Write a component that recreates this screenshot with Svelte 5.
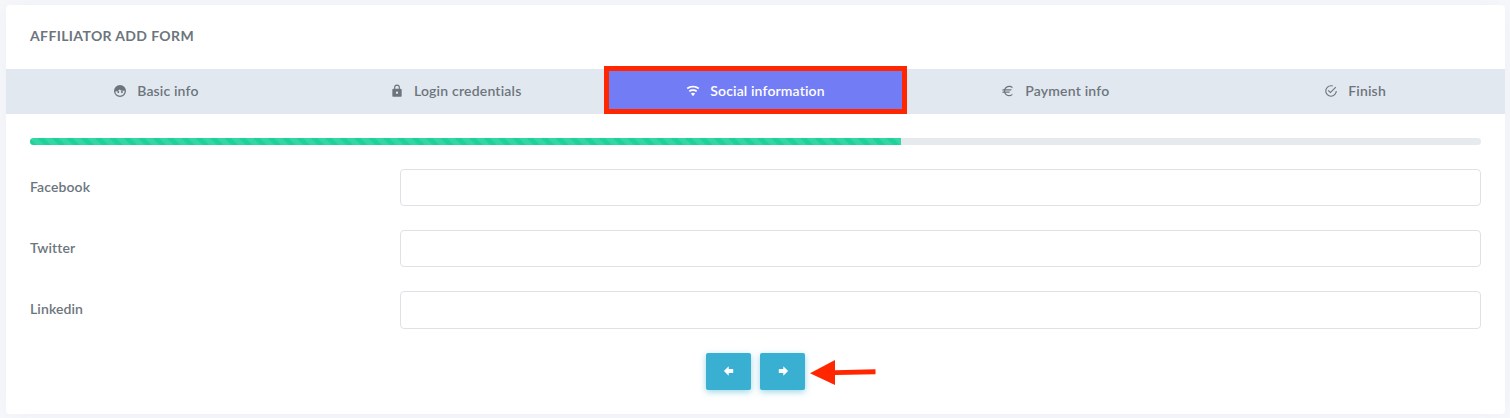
<script>
  const tabs = [
    { id: 'basic', label: 'Basic info', spacing: 0.15 },
    { id: 'login', label: 'Login credentials', spacing: 0.2 },
    { id: 'social', label: 'Social information', spacing: 0.14, active: true },
    { id: 'payment', label: 'Payment info', spacing: 0.2 },
    { id: 'finish', label: 'Finish', spacing: 0.18 }
  ];
  const fields = ['Facebook', 'Twitter', 'Linkedin'];
  const progress = 60;
</script>

<main>
  <section class="card">
    <h4>AFFILIATOR ADD FORM</h4>
    <nav>
      {#each tabs as tab}
        <div class="tab" class:active={tab.active}>
          <svg class="icon" viewBox="0 0 24 24" fill="currentColor">
            {#if tab.id === 'basic'}
              <path fill-rule="evenodd" d="M12 1.8a10.3 10.3 0 1 0 0 20.6 10.3 10.3 0 0 0 0-20.6ZM12 20c-4.41 0-8-3.2-8-7.2C7.2 12.6 9.5 11.8 11.5 9.5c1 1.2 2 1.7 3.5 2h5c0 5-3.59 8.5-8 8.5Z"/>
              <path d="M9 12.2a1.6 1.6 0 1 0 .01 0M15.3 12.2a1.6 1.6 0 1 0 .01 0"/>
            {:else if tab.id === 'login'}
              <path fill-rule="evenodd" d="M12 17a2 2 0 0 0 2-2 2 2 0 1 0-2 2m6-9a2 2 0 0 1 2 2v10a2 2 0 0 1-2 2H6a2 2 0 0 1-2-2V10a2 2 0 0 1 2-2h1V6a5 5 0 0 1 10 0v2h1m-6-5a3 3 0 0 0-3 3v2h6V6a3 3 0 0 0-3-3z"/>
            {:else if tab.id === 'social'}
              <path d="M12 21l3.6-4.8c-1-.75-2.25-1.2-3.6-1.2s-2.6.45-3.6 1.2L12 21m0-18C7.95 3 4.21 4.34 1.2 6.6L3 9c2.5-1.88 5.62-3 9-3s6.5 1.12 9 3l1.8-2.4C19.79 4.34 16.05 3 12 3m0 6c-2.7 0-5.19.89-7.2 2.4l1.8 2.4C8.1 12.67 9.97 12 12 12s3.9.67 5.4 1.8l1.8-2.4C17.19 9.89 14.7 9 12 9z"/>
            {:else if tab.id === 'payment'}
              <path d="M7.07 11L7 12l.07 1h8.28l-.88 2H7.67c1.14 2.39 3.56 4 6.33 4 2.25 0 4.24-1.06 5.5-2.71v2.58A8.96 8.96 0 0 1 14 21c-3.91 0-7.24-2.5-8.48-6H2l1-2h2.05L5 12l.05-1H2l1-2h2.52C6.76 5.5 10.09 3 14 3c2.33 0 4.45.89 6.05 2.34l-.82 1.88A6.99 6.99 0 0 0 14 5C11.23 5 8.81 6.61 7.67 9h10.58l-.87 2H7.07z"/>
            {:else}
              <path d="M20 12a8 8 0 1 1-8-8c.76 0 1.5.11 2.2.31l1.57-1.57A9.82 9.82 0 0 0 12 2a10 10 0 1 0 10 10M7.91 10.08L6.5 11.5 11 16 21 6l-1.41-1.42L11 13.17l-3.09-3.09z"/>
            {/if}
          </svg>
          <span style="letter-spacing: {tab.spacing}px">{tab.label}</span>
        </div>
      {/each}
    </nav>
    <form onsubmit={(e) => e.preventDefault()}>
      <div class="progress"><div class="bar" style="width: {progress}%"></div></div>
      {#each fields as name}
        <label class="row"><span class="name">{name}</span><input type="text" /></label>
      {/each}
      <div class="actions">
        <button type="button" aria-label="Previous">
          <svg viewBox="0 0 12 12"><path d="M.9 6l4.8-4.8v2.9h4.5v3.8H5.7v2.9z"/></svg>
        </button>
        <button type="button" aria-label="Next">
          <svg viewBox="0 0 12 12"><path d="M11.1 6L6.3 1.2v2.9H1.8v3.8h4.5v2.9z"/></svg>
        </button>
        <svg class="pointer" viewBox="0 0 66 26"><path d="M0 13.2L25 0v10.2L65.5 9.2v5L25 15.1V25z"/></svg>
      </div>
    </form>
  </section>
</main>

<style>
  :global(body) { background: #f7f8fc; }
  main {
    box-sizing: border-box;
    height: 418px;
    padding: 5px 5px 4px 6px;
    font-family: Lato, sans-serif;
    font-size: 14px;
    font-weight: 600;
    font-variant-ligatures: none;
    color: #6c757d;
    overflow: hidden;
  }
  .card {
    height: 409px;
    background: #fff;
    border-radius: 4px;
    box-shadow: 0 0 24px rgba(154, 161, 171, 0.1);
  }
  h4 {
    box-sizing: border-box;
    height: 64px;
    margin: 0;
    padding: 0 24px 2px;
    line-height: 62px;
    font-size: 14px;
    font-weight: 700;
    letter-spacing: 0.37px;
  }
  nav { display: grid; grid-template-columns: repeat(5, 1fr); height: 45px; background: #e2e8ef; }
  .tab {
    position: relative;
    box-sizing: border-box;
    display: flex;
    align-items: center;
    justify-content: center;
    gap: 10px;
    padding-bottom: 2px;
    white-space: nowrap;
  }
  .icon { width: 14px; height: 14px; flex: none; }
  .active { color: #fff; background: #727cf5; }
  .active::after {
    content: '';
    position: absolute;
    inset: -3px -1.6px 0;
    border: 5px solid #ff2600;
  }
  form { padding: 24px 24px 0; }
  .progress { height: 7px; margin-bottom: 24px; border-radius: 4px; overflow: hidden; background: #e7eaed; }
  .bar {
    height: 100%;
    background: linear-gradient(45deg, rgba(255,255,255,.1) 25%, transparent 25%, transparent 50%, rgba(255,255,255,.1) 50%, rgba(255,255,255,.1) 75%, transparent 75%) 0 0 / 14.4px 14.4px #1dd19a;
  }
  .row { display: grid; grid-template-columns: 370px 1fr; height: 37.2px; margin-bottom: 24px; line-height: 36.4px; }
  .name { letter-spacing: 0.12px; }
  input {
    box-sizing: border-box;
    width: 100%;
    height: 100%;
    border: 1px solid #dee2e6;
    border-radius: 4px;
    background: #fff;
    outline: none;
  }
  .actions { position: relative; display: flex; justify-content: center; gap: 9px; height: 37px; padding-top: 0.4px; }
  button {
    box-sizing: border-box;
    display: flex;
    align-items: center;
    justify-content: center;
    width: 45px;
    padding: 0 0 1px;
    border: 0;
    border-radius: 2px;
    background: #39afd1;
    box-shadow: 0 2px 6px rgba(57, 175, 209, .5);
  }
  button svg { width: 12px; height: 12px; fill: #fff; }
  .pointer { position: absolute; left: 780px; top: 7px; width: 66px; height: 26px; fill: #ff2600; }
</style>
